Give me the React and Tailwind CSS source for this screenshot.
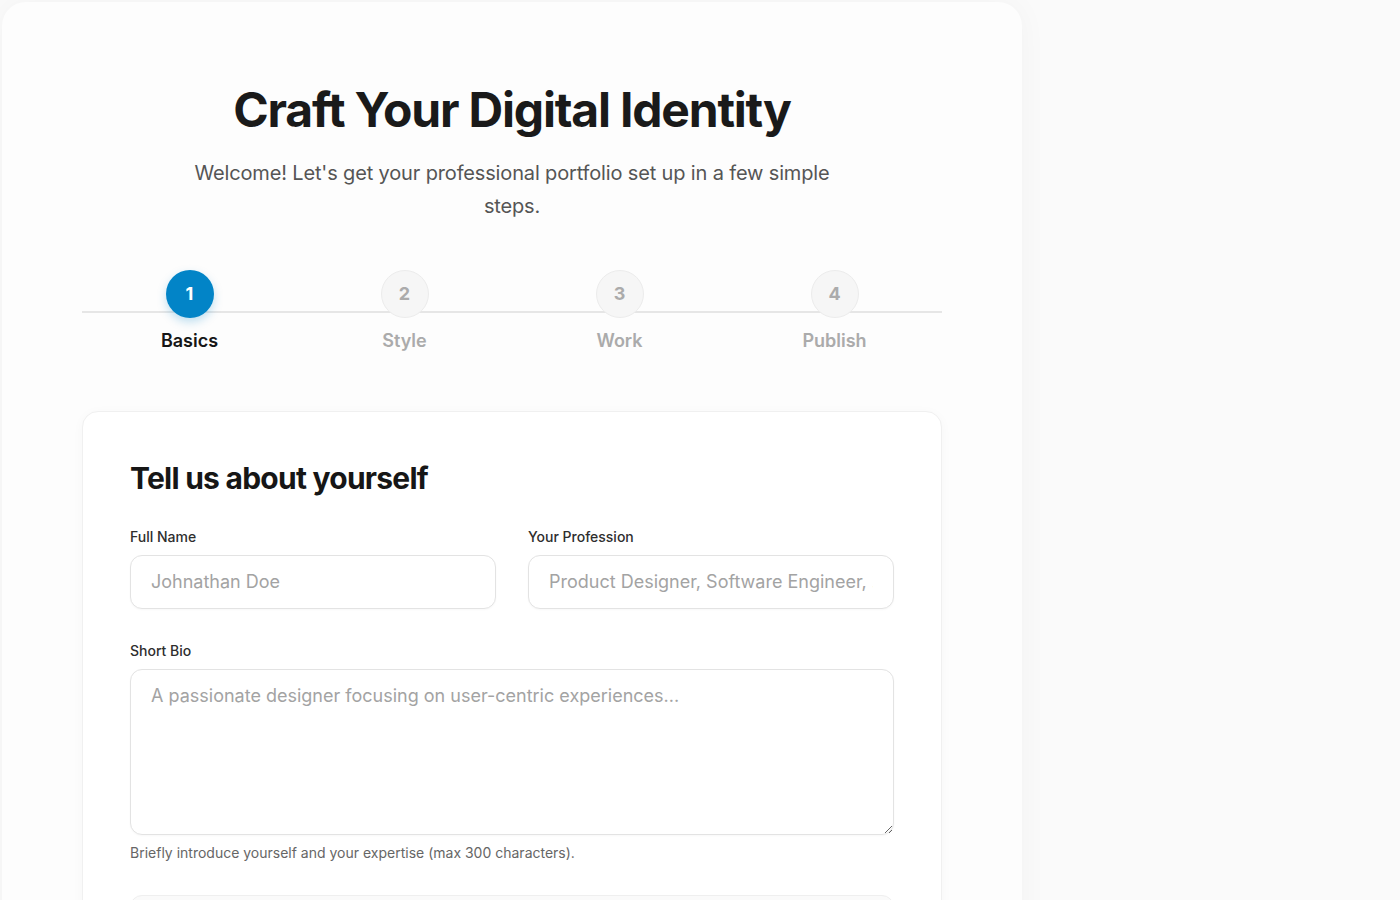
const STEPS = [
  { n: 1, label: 'Basics' },
  { n: 2, label: 'Style' },
  { n: 3, label: 'Work' },
  { n: 4, label: 'Publish' },
];

function Stepper({ current }) {
  return (
    <div className="relative mt-[47px]">
      <div className="absolute left-0 right-0 top-[41px] h-[2px] bg-[#e6e6e6]" />
      <div className="relative grid grid-cols-4">
        {STEPS.map((step) => {
          const active = step.n === current;
          return (
            <div key={step.n} className="flex flex-col items-center">
              <div
                className={
                  active
                    ? 'flex h-12 w-12 items-center justify-center rounded-full bg-[#0284c7] text-lg font-bold text-white shadow-[0_4px_10px_rgba(2,132,199,0.25)]'
                    : 'flex h-12 w-12 items-center justify-center rounded-full border border-[#ececec] bg-[#f6f6f6] text-lg font-bold text-[#ababab]'
                }
              >
                {step.n}
              </div>
              <span className={`mt-[9px] text-lg font-semibold leading-7 ${active ? 'text-[#161616]' : 'text-[#ababab]'}`}>
                {step.label}
              </span>
            </div>
          );
        })}
      </div>
    </div>
  );
}

function Field({ label, placeholder }) {
  return (
    <label className="flex flex-col">
      <span className="mb-2 text-sm font-medium leading-5 text-[#2e2e2e]">{label}</span>
      <input
        placeholder={placeholder}
        className="h-[54px] rounded-xl border border-[#e3e3e3] bg-white px-5 text-lg leading-[27px] text-[#222] shadow-[0_1px_2px_rgba(0,0,0,0.03)] outline-none placeholder:text-[#a3a3a3]"
      />
    </label>
  );
}

export default function App() {
  return (
    <div className="min-h-screen bg-[#fafafa] pl-[2px] pt-[2px] font-['Inter',sans-serif] text-[#1a1a1a]">
      <div className="w-[1020px] rounded-t-[24px] bg-[#fdfdfd] px-20 pb-20 pt-[82px] shadow-[0_0_30px_rgba(0,0,0,0.035)]">
        <div className="flex flex-col items-center text-center">
          <h1 className="text-5xl font-bold leading-[1.1] tracking-[-0.025em] text-[#1a1a1a]">Craft Your Digital Identity</h1>
          <p className="mt-5 max-w-[660px] text-xl leading-[33px] tracking-[-0.15px] text-[#555]">
            Welcome! Let's get your professional portfolio set up in a few simple steps.
          </p>
        </div>

        <Stepper current={1} />

        <div className="mt-14 rounded-2xl border border-[#f0f0f0] bg-white px-[47px] pb-12 pt-12 shadow-[0_2px_12px_rgba(0,0,0,0.03)]">
          <h2 className="text-3xl font-bold leading-9 tracking-[-0.025em] text-[#161616]">Tell us about yourself</h2>

          <div className="mt-[31px] grid grid-cols-2 gap-8">
            <Field label="Full Name" placeholder="Johnathan Doe" />
            <Field label="Your Profession" placeholder="Product Designer, Software Engineer, ..." />
          </div>

          <label className="mt-8 flex flex-col">
            <span className="mb-2 text-sm font-medium leading-5 text-[#2e2e2e]">Short Bio</span>
            <textarea
              placeholder="A passionate designer focusing on user-centric experiences..."
              className="h-[166px] rounded-xl border border-[#e3e3e3] bg-white px-5 py-3 text-lg leading-[27px] text-[#222] shadow-[0_1px_2px_rgba(0,0,0,0.03)] outline-none placeholder:text-[#a3a3a3]"
            />
            <span className="mt-2 text-sm leading-5 text-[#666]">
              Briefly introduce yourself and your expertise (max 300 characters).
            </span>
          </label>

          <div className="mt-8 h-[140px] rounded-xl border border-[#efefef] bg-[#fafafa]" />
        </div>
      </div>
    </div>
  );
}
